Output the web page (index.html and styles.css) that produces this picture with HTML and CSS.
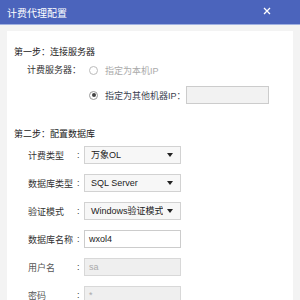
FILE: index.html
```html
<!DOCTYPE html>
<html>
  <head>
    <title>计费代理配置</title>
    <link rel="stylesheet" href="styles.css">
  </head>
  <body>
    <div class="titlebar">
      <span class="title">计费代理配置</span>
      <svg class="close" width="8" height="8" viewBox="0 0 8 8">
        <path d="M1 1L7 7M7 1L1 7" stroke="#fff" stroke-width="1.3" />
      </svg>
    </div>

    <div class="content">
      <div class="panel">
        <div class="step">第一步：连接服务器</div>
        <div class="server">
          <span class="server-label">计费服务器：</span>
          <div class="radios">
            <div class="radio-row">
              <span class="radio"></span>
              <span class="radio-text disabled">指定为本机IP</span>
            </div>
            <div class="radio-row">
              <span class="radio checked"></span>
              <span class="radio-text">指定为其他机器IP：</span>
              <span class="field ip"></span>
            </div>
          </div>
        </div>

        <div class="step step2">第二步：配置数据库</div>
        <div class="rows">
          <div class="row">
            <span class="label">计费类型</span><span class="colon">:</span>
            <span class="select">万象OL<i class="arrow"></i></span>
          </div>
          <div class="row">
            <span class="label">数据库类型</span><span class="colon">:</span>
            <span class="select">SQL Server<i class="arrow"></i></span>
          </div>
          <div class="row">
            <span class="label">验证模式</span><span class="colon">:</span>
            <span class="select">Windows验证模式<i class="arrow"></i></span>
          </div>
          <div class="row">
            <span class="label">数据库名称</span><span class="colon">:</span>
            <span class="field input">wxol4</span>
          </div>
          <div class="row">
            <span class="label muted">用户名</span><span class="colon">:</span>
            <span class="field input off">sa</span>
          </div>
          <div class="row">
            <span class="label muted">密码</span><span class="colon">:</span>
            <span class="field input off">*</span>
          </div>
        </div>
      </div>
    </div>
  </body>
</html>
```

FILE: styles.css
```css
body {
  margin: 0;
  background: #f3f3f3;
  font-family: "Liberation Sans", "Noto Sans CJK SC", sans-serif;
  color: #333;
  height: 300px;
  overflow: hidden;
}
.titlebar {
  height: 24px;
  background: #4b64bc;
  border-bottom: 1px solid #9fb0e0;
  display: flex;
  align-items: center;
  justify-content: space-between;
  padding: 0 29px 0 7px;
}
.title {
  color: #fff;
  font-size: 10px;
}
.close {
  margin-top: -2px;
}
.content {
  padding: 6px 7px 0 7px;
}
.panel {
  background: #fff;
  padding: 14px 0 0 7px;
  height: calc(100vh - 45px);
}
.step {
  font-size: 9px;
  height: 14px;
  line-height: 14px;
  color: #222;
}
.step2 {
  margin-top: 23px;
}
.server {
  display: flex;
  margin-top: 2px;
  padding-left: 13px;
}
.server-label {
  font-size: 9px;
  line-height: 18px;
  width: 62px;
}
.radios {
  display: flex;
  flex-direction: column;
  gap: 7px;
}
.radio-row {
  display: flex;
  align-items: center;
  height: 18px;
}
.radio {
  width: 7px;
  height: 7px;
  border: 1px solid #bbb;
  border-radius: 50%;
  margin-right: 7px;
  display: flex;
  align-items: center;
  justify-content: center;
}
.radio.checked {
  border-color: #999;
}
.radio.checked::after {
  content: "";
  width: 4px;
  height: 4px;
  border-radius: 50%;
  background: #444;
}
.radio-text {
  font-size: 9px;
  color: #3a4150;
  width: 81px;
}
.radio-text.disabled {
  color: #aaa;
}
.field {
  box-sizing: border-box;
  height: 18px;
  border: 1px solid #ccc;
  background: #f2f2f2;
}
.ip {
  width: 83px;
}
.rows {
  margin-top: 5px;
  display: flex;
  flex-direction: column;
  gap: 10px;
}
.row {
  display: flex;
  align-items: center;
  height: 18px;
  padding-left: 14px;
  font-size: 9px;
}
.label {
  width: 49px;
}
.label.muted {
  color: #555;
}
.colon {
  width: 7px;
}
.select {
  box-sizing: border-box;
  width: 97px;
  height: 18px;
  border: 1px solid #d2d2d2;
  background: #f7f7f7;
  padding-left: 6px;
  line-height: 16px;
  position: relative;
  color: #222;
  overflow: hidden;
  white-space: nowrap;
}
.arrow {
  position: absolute;
  right: 0;
  top: 0;
  width: 17px;
  height: 16px;
  background: #f7f7f7;
}
.arrow::after {
  content: "";
  position: absolute;
  left: 4px;
  top: 6px;
  border-left: 3.5px solid transparent;
  border-right: 3.5px solid transparent;
  border-top: 4px solid #222;
}
.input {
  width: 97px;
  background: #fff;
  padding-left: 4px;
  line-height: 16px;
  color: #222;
}
.input.off {
  background: #efefef;
  border-color: #d8d8d8;
  color: #aaa;
}
```
